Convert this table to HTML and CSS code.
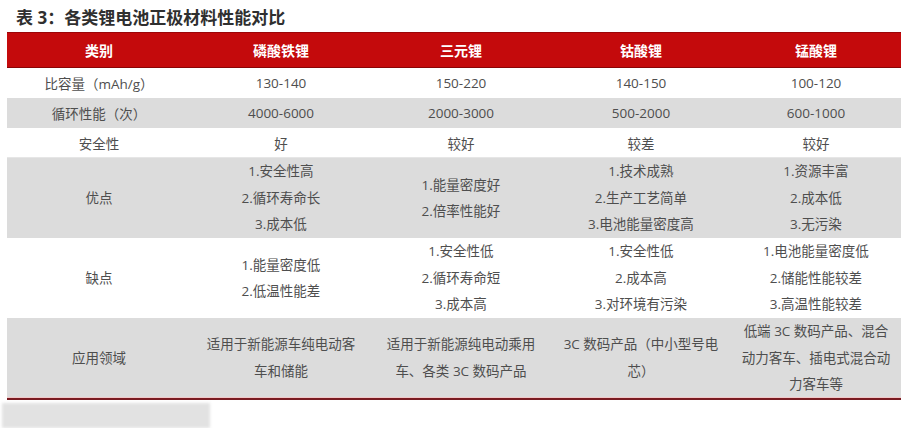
FILE: index.html
```html
<!DOCTYPE html>
<html lang="zh-CN">
<head>
<meta charset="utf-8">
<title>表 3：各类锂电池正极材料性能对比</title>
<link rel="stylesheet" href="styles.css">
</head>
<body>
<div class="page">
  <h1 class="title">表 3：各类锂电池正极材料性能对比</h1>
  <table class="cmp">
    <colgroup>
      <col class="c1"><col class="c2"><col class="c3"><col class="c4"><col class="c5">
    </colgroup>
    <thead>
      <tr class="head">
        <th>类别</th><th>磷酸铁锂</th><th>三元锂</th><th>钴酸锂</th><th>锰酸锂</th>
      </tr>
    </thead>
    <tbody>
      <tr class="r1">
        <td>比容量（mAh/g）</td><td>130-140</td><td>150-220</td><td>140-150</td><td>100-120</td>
      </tr>
      <tr class="r2 gray">
        <td>循环性能（次）</td><td>4000-6000</td><td>2000-3000</td><td>500-2000</td><td>600-1000</td>
      </tr>
      <tr class="r3">
        <td>安全性</td><td>好</td><td>较好</td><td>较差</td><td>较好</td>
      </tr>
      <tr class="r4 gray multi">
        <td>优点</td>
        <td>1.安全性高<br>2.循环寿命长<br>3.成本低</td>
        <td>1.能量密度好<br>2.倍率性能好</td>
        <td>1.技术成熟<br>2.生产工艺简单<br>3.电池能量密度高</td>
        <td>1.资源丰富<br>2.成本低<br>3.无污染</td>
      </tr>
      <tr class="r5 multi">
        <td>缺点</td>
        <td>1.能量密度低<br>2.低温性能差</td>
        <td>1.安全性低<br>2.循环寿命短<br>3.成本高</td>
        <td>1.安全性低<br>2.成本高<br>3.对环境有污染</td>
        <td>1.电池能量密度低<br>2.储能性能较差<br>3.高温性能较差</td>
      </tr>
      <tr class="r6 gray multi last">
        <td>应用领域</td>
        <td>适用于新能源车纯电动客<br>车和储能</td>
        <td>适用于新能源纯电动乘用<br>车、各类 3C 数码产品</td>
        <td>3C 数码产品（中小型号电<br>芯）</td>
        <td>低端 3C 数码产品、混合<br>动力客车、插电式混合动<br>力客车等</td>
      </tr>
    </tbody>
  </table>
  <div class="smudge"></div>
</div>
</body>
</html>
```

FILE: styles.css
```css
html, body {
  margin: 0;
  padding: 0;
  background: #ffffff;
}

.page {
  width: 913px;
  height: 428px;
  overflow: hidden;
  font-family: "Open Sans", "Noto Sans CJK SC", "Liberation Sans", sans-serif;
}

.title {
  margin: 0;
  padding: 7px 0 0 16px;
  height: 25px;
  font-size: 17px;
  line-height: 22px;
  font-weight: 700;
  color: #2f2f2f;
}

.cmp {
  margin-left: 7px;
  width: 894px;
  border-collapse: collapse;
  table-layout: fixed;
  font-size: 13.5px;
  color: #4e4e4e;
}

.c1 { width: 184px; }
.c2 { width: 180px; }
.c3 { width: 180px; }
.c4 { width: 180px; }
.c5 { width: 170px; }

.cmp th,
.cmp td {
  padding: 0;
  text-align: center;
  vertical-align: middle;
  font-weight: 400;
}

.head th {
  height: 34px;
  background: #c40a0c;
  color: #ffffff;
  font-weight: 700;
  font-size: 14px;
  border-top: 1px solid #9c0508;
  border-bottom: 1px solid #8a0406;
}

.r1 td, .r2 td { height: 30px; }
.r3 td {
  height: 29px;
  border-bottom: 1px solid #e6e6e6;
}

.gray td { background: #dcdcdc; }

.multi td { line-height: 26.5px; }
.r4 td, .r5 td { height: 80px; }
.r6 td {
  height: 78px;
  box-shadow: inset 0 -1px 0 #f2c9c9;
  border-bottom: 2px solid #7a1c22;
}

.smudge {
  margin: 3px 0 0 2px;
  width: 208px;
  height: 25px;
  background: #e2e2e2;
  filter: blur(1.5px);
}
```
